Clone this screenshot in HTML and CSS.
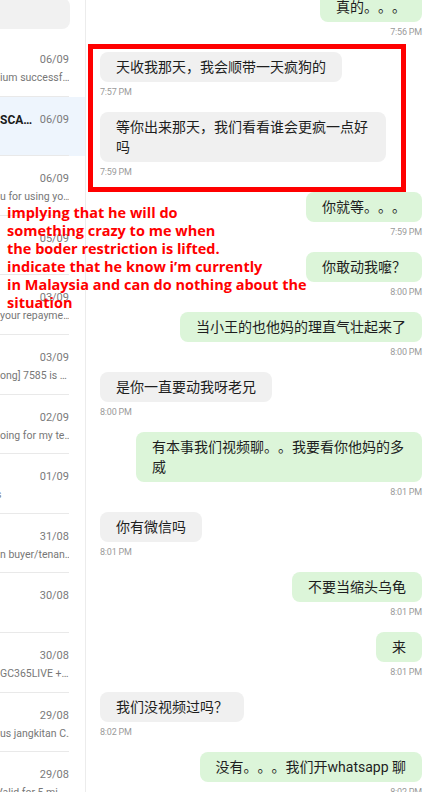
FILE: index.html
```html
<!DOCTYPE html>
<html lang="zh">
<head>
<meta charset="utf-8">
<title>Chat</title>
<link rel="stylesheet" href="styles.css">
</head>
<body>
<div class="screen">
  <aside class="list-pane">
    <div class="search"></div>
    <ul class="conv-list">
      <li class="item"><div class="item-body"><div class="row"><span class="title"></span><span class="date">06/09</span></div><div class="preview">ium successf…</div></div></li>
      <li class="item selected"><div class="item-body"><div class="row"><span class="title">SCA…</span><span class="date">06/09</span></div><div class="preview"></div></div></li>
      <li class="item"><div class="item-body"><div class="row"><span class="title"></span><span class="date">06/09</span></div><div class="preview">u for using yo…</div></div></li>
      <li class="item"><div class="item-body"><div class="row"><span class="title"></span><span class="date">05/09</span></div><div class="preview"></div></div></li>
      <li class="item"><div class="item-body"><div class="row"><span class="title"></span><span class="date">03/09</span></div><div class="preview">your repayme…</div></div></li>
      <li class="item"><div class="item-body"><div class="row"><span class="title"></span><span class="date">03/09</span></div><div class="preview">ong] 7585 is …</div></div></li>
      <li class="item"><div class="item-body"><div class="row"><span class="title"></span><span class="date">02/09</span></div><div class="preview">oing for my te…</div></div></li>
      <li class="item"><div class="item-body"><div class="row"><span class="title"></span><span class="date">01/09</span></div><div class="preview preview-left">s</div></div></li>
      <li class="item"><div class="item-body"><div class="row"><span class="title"></span><span class="date">31/08</span></div><div class="preview">n buyer/tenan…</div></div></li>
      <li class="item"><div class="item-body"><div class="row"><span class="title"></span><span class="date">30/08</span></div><div class="preview"></div></div></li>
      <li class="item"><div class="item-body"><div class="row"><span class="title"></span><span class="date">30/08</span></div><div class="preview">GC365LIVE +…</div></div></li>
      <li class="item"><div class="item-body"><div class="row"><span class="title"></span><span class="date">29/08</span></div><div class="preview">us jangkitan C…</div></div></li>
      <li class="item"><div class="item-body"><div class="row"><span class="title"></span><span class="date">29/08</span></div><div class="preview preview-left">Valid for 5 mi</div></div></li>
    </ul>
  </aside>

  <main class="chat">
    <div class="msg out first"><div class="bubble">真的。。。</div><div class="time">7:56 PM</div></div>
    <div class="msg in"><div class="bubble">天收我那天，我会顺带一天疯狗的</div><div class="time">7:57 PM</div></div>
    <div class="msg in"><div class="bubble">等你出来那天，我们看看谁会更疯一点好吗</div><div class="time">7:59 PM</div></div>
    <div class="msg out"><div class="bubble">你就等。。。</div><div class="time">7:59 PM</div></div>
    <div class="msg out"><div class="bubble">你敢动我嚒？</div><div class="time">8:00 PM</div></div>
    <div class="msg out"><div class="bubble">当小王的也他妈的理直气壮起来了</div><div class="time">8:00 PM</div></div>
    <div class="msg in"><div class="bubble">是你一直要动我呀老兄</div><div class="time">8:00 PM</div></div>
    <div class="msg out"><div class="bubble">有本事我们视频聊。。我要看你他妈的多威</div><div class="time">8:01 PM</div></div>
    <div class="msg in"><div class="bubble">你有微信吗</div><div class="time">8:01 PM</div></div>
    <div class="msg out"><div class="bubble">不要当缩头乌龟</div><div class="time">8:01 PM</div></div>
    <div class="msg out"><div class="bubble">来</div><div class="time">8:01 PM</div></div>
    <div class="msg in"><div class="bubble">我们没视频过吗？</div><div class="time">8:02 PM</div></div>
    <div class="msg out"><div class="bubble">没有。。。我们开whatsapp 聊</div><div class="time">8:02 PM</div></div>
  </main>

  <div class="highlight-box"></div>
  <p class="annotation">implying that he will do<br>something crazy to me when<br>the boder restriction is lifted.<br>indicate that he know i’m currently<br>in Malaysia and can do nothing about the<br>situation</p>
</div>
</body>
</html>
```

FILE: styles.css
```css
* { box-sizing: border-box; }

html, body {
  margin: 0;
  padding: 0;
  background: #ffffff;
}

.screen {
  position: relative;
  width: 430px;
  height: 792px;
  overflow: hidden;
  display: flex;
  font-family: Roboto, "Noto Sans CJK SC", sans-serif;
}

/* ---------- conversation list ---------- */
.list-pane {
  flex: 0 0 86px;
  width: 86px;
  height: 792px;
  border-right: 1px solid #ececec;
  overflow: hidden;
  background: #ffffff;
}

.search {
  height: 31px;
  margin: -2px 15px 0 -20px;
  background: #f1f1f1;
  border-radius: 8px;
}

.conv-list {
  list-style: none;
  margin: 8px 0 0 0;
  padding: 0;
}

.item {
  height: 59.6px;
}

.item.selected {
  background: #eef5fd;
}

.item-body {
  height: 100%;
  margin-right: 16px;
  padding-top: 16px;
  border-bottom: 1px solid #e9e9e9;
  overflow: hidden;
}

.row {
  display: flex;
  justify-content: space-between;
  align-items: center;
  height: 14px;
}

.title {
  font-size: 12px;
  font-weight: 700;
  color: #1a1a1a;
  white-space: nowrap;
}

.date {
  font-size: 11px;
  color: #7a7a7a;
  line-height: 14px;
}

.preview {
  margin-top: 4px;
  height: 14px;
  font-size: 10.5px;
  line-height: 14px;
  color: #777777;
  white-space: nowrap;
  text-align: right;
  padding-right: 6px;
}

.preview-left {
  text-align: left;
  margin-left: -4px;
  padding-right: 0;
}

/* ---------- chat ---------- */
.chat {
  flex: 1;
  display: flex;
  flex-direction: column;
  padding: 0 8px 0 14px;
}

.msg {
  display: flex;
  flex-direction: column;
  margin-bottom: 14px;
}

.msg.first { margin-top: -8px; }

.msg.in { align-items: flex-start; }
.msg.out { align-items: flex-end; }

.bubble {
  max-width: 286px;
  padding: 5px 16px;
  border-radius: 8px;
  font-size: 14px;
  line-height: 20px;
  color: #1e1e1e;
  text-spacing-trim: space-all;
}

.msg.in .bubble { background: #f0f0f0; }
.msg.out .bubble { background: #dcf5d9; }

.time {
  margin-top: 4px;
  font-size: 9px;
  line-height: 12px;
  color: #9a9a9a;
  letter-spacing: -0.2px;
}

/* ---------- annotations (drawn over the screenshot) ---------- */
.highlight-box {
  position: absolute;
  left: 88px;
  top: 44px;
  width: 318px;
  height: 148px;
  border: 5px solid #ff0000;
}

.annotation {
  position: absolute;
  left: 7px;
  top: 204px;
  margin: 0;
  font-family: "Open Sans", Lato, sans-serif;
  font-weight: 700;
  font-size: 14.5px;
  line-height: 18px;
  color: #ff0000;
  white-space: nowrap;
}
```
